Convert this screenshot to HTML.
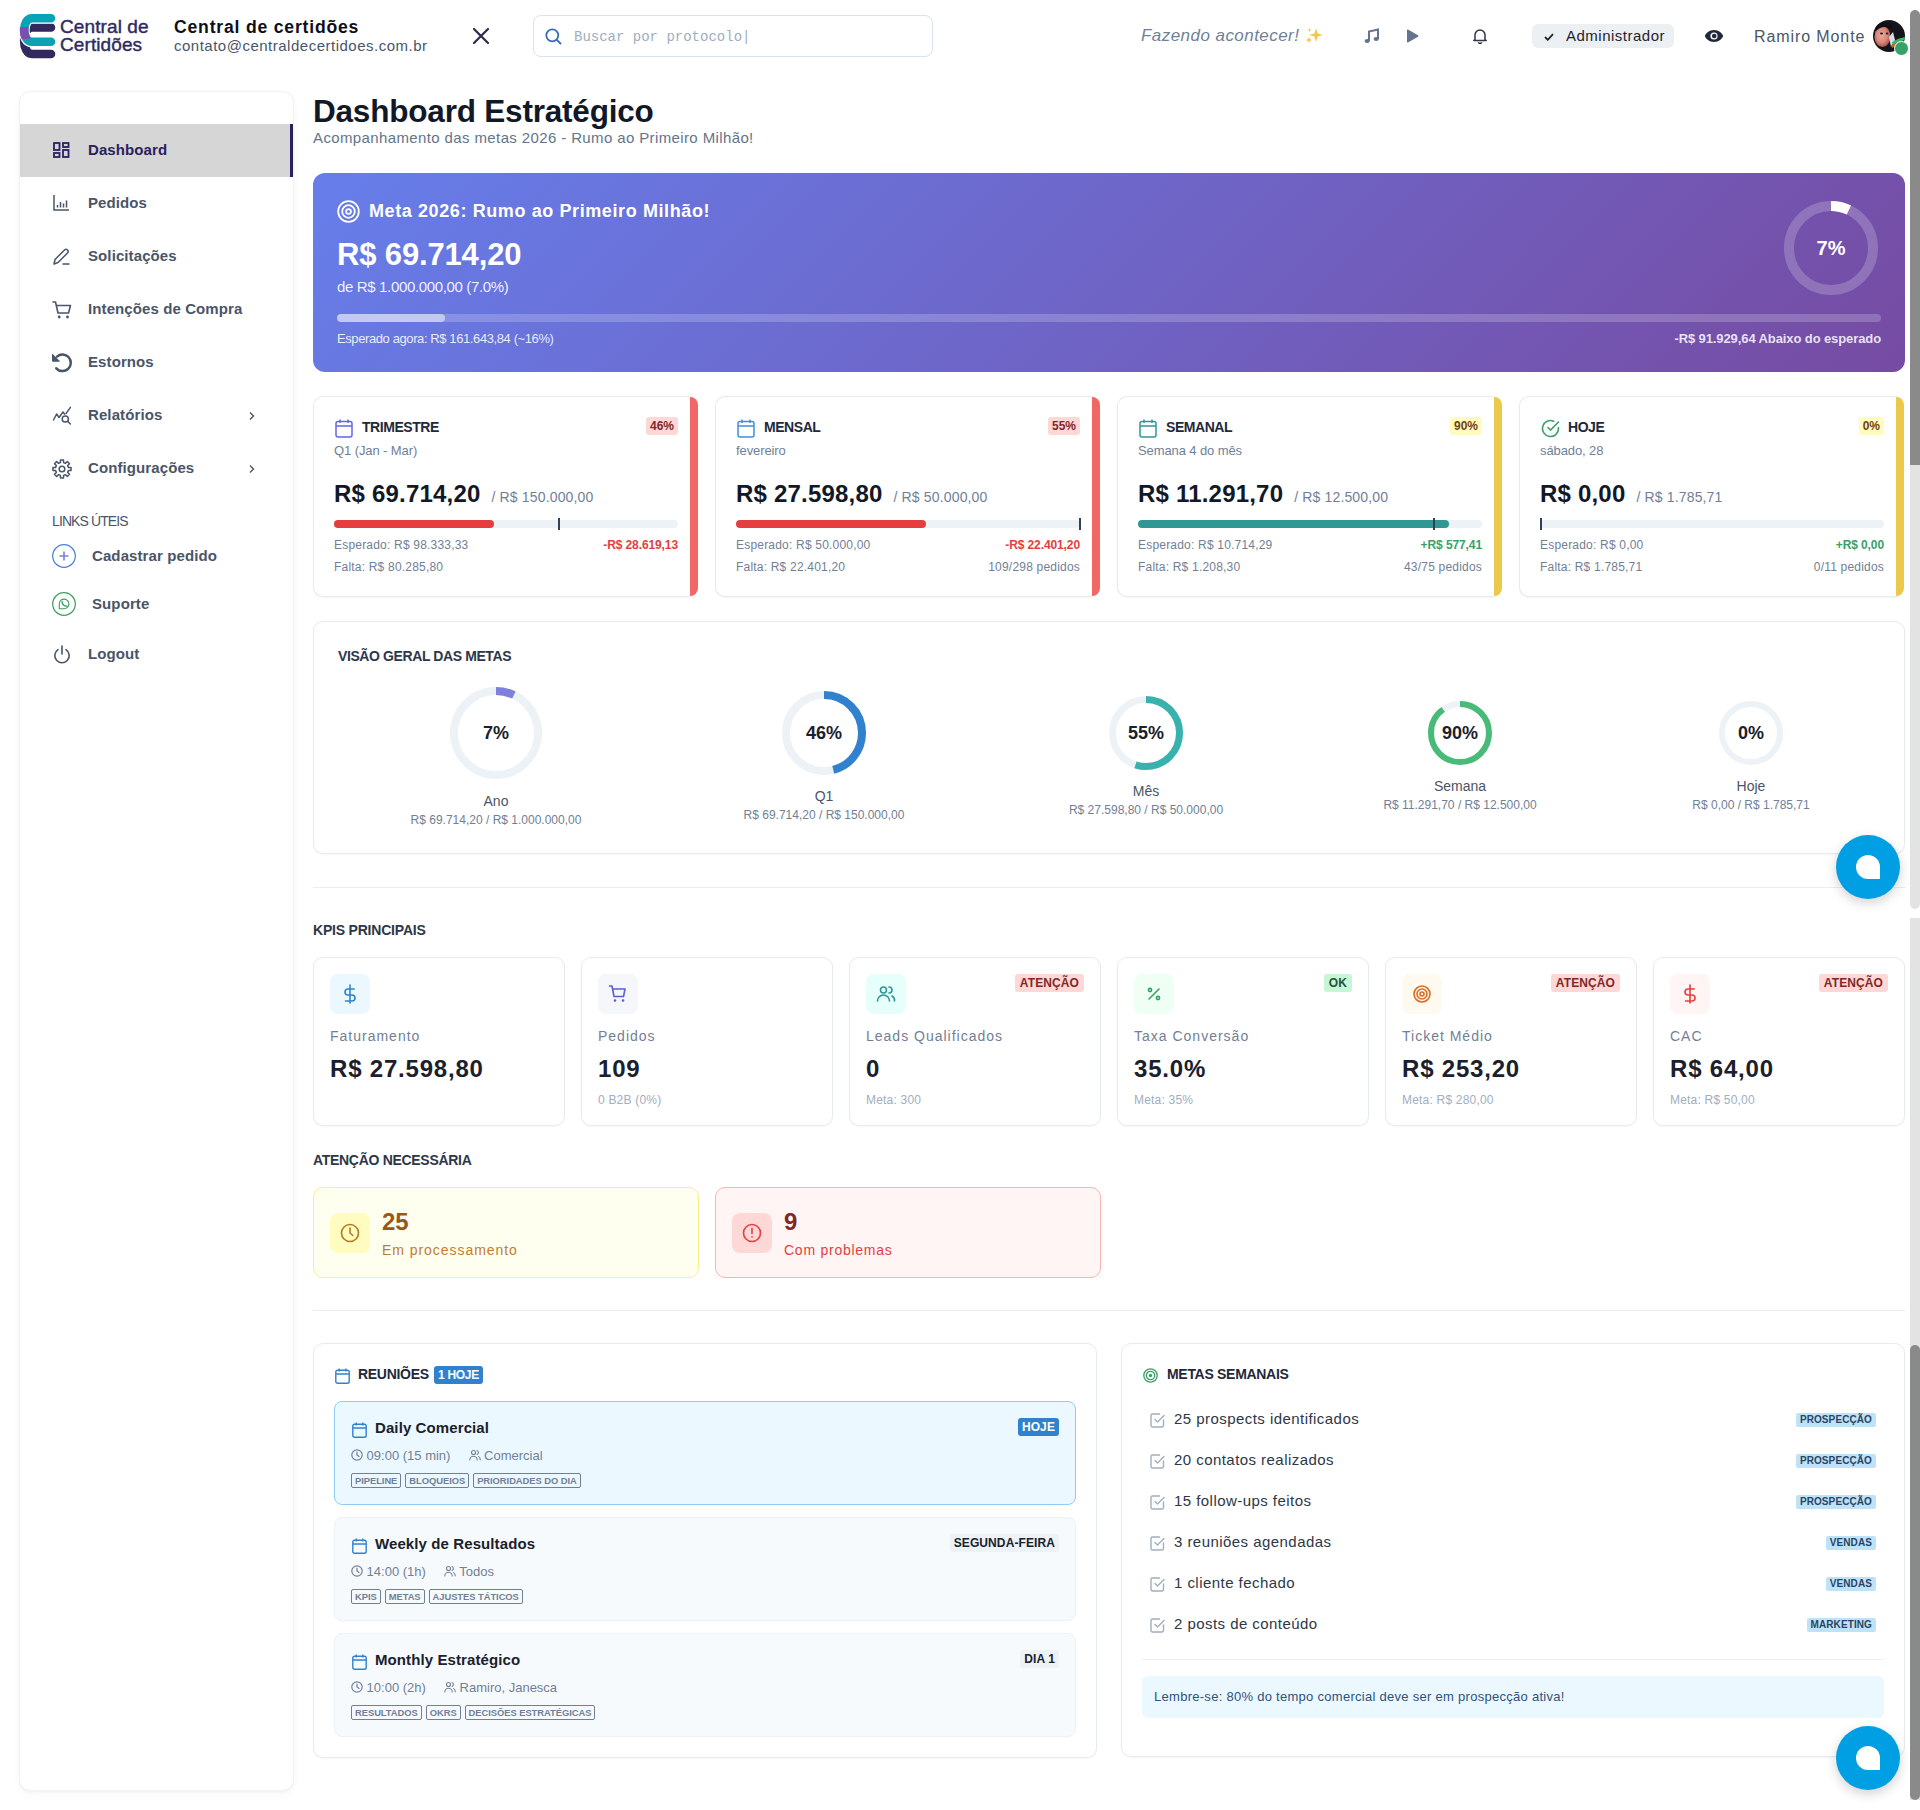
<!DOCTYPE html>
<html lang="pt-BR">
<head>
<meta charset="utf-8">
<title>Dashboard Estratégico</title>
<style>
*{box-sizing:border-box;margin:0;padding:0}
html,body{width:1920px;height:1810px;overflow:hidden;background:#fff}
body{position:relative;font-family:"Liberation Sans",sans-serif;color:#1a202c}
.abs{position:absolute}
.nw{white-space:nowrap}
svg{display:block}
/* header */
.hdr-title{left:174px;top:16.5px;font-size:17.6px;font-weight:700;color:#0f0f1a;letter-spacing:.8px}
.hdr-mail{left:174px;top:37px;font-size:15px;color:#4a5568;letter-spacing:.5px}
.search{left:533px;top:15px;width:400px;height:42px;border:1px solid #d9e2f0;border-radius:8px}
.search .ph{position:absolute;left:40px;top:13px;font-family:"Liberation Mono",monospace;font-size:14px;color:#a0aec0}
.motto{left:1141px;top:26px;font-size:17px;font-style:italic;color:#718096;letter-spacing:.45px}
.admin{left:1532px;top:24px;width:142px;height:24px;background:#edf0f2;border-radius:6px}
.admin span{position:absolute;left:34px;top:3px;font-size:15px;color:#1f2330;letter-spacing:.5px}
.uname{left:1754px;top:27.5px;font-size:16px;color:#4a5568;letter-spacing:.9px}
/* sidebar */
.side{left:20px;top:92px;width:273px;height:1698px;background:#fff;border-radius:10px;box-shadow:0 0 0 1px #f0f2f7,0 1px 3px rgba(0,0,0,.07),0 4px 10px rgba(0,0,0,.04)}
.nav{position:absolute;left:0;width:273px;height:53px}
.nav .ic{position:absolute;left:33px;top:18px}
.nav .lb{position:absolute;left:68px;top:17px;font-size:15px;font-weight:700;color:#4a5568;letter-spacing:.1px}
.nav.act{background:#d6d6d6;border-right:3px solid #2a2160}
.nav.act .lb{color:#2a2160}
.chev{position:absolute;left:228px;top:22px}
/* scrollbar */
.sb{left:1910px;width:10px}
/* chat */
.chat{left:1836px;width:64px;height:64px;border-radius:50%;background:#009ee3;box-shadow:0 4px 12px rgba(0,0,0,.18)}
.chat i{position:absolute;left:20px;top:20px;width:24px;height:24px;background:#fff;border-radius:12px 12px 0 12px}
</style>
</head>
<body>

<!-- ===== HEADER ===== -->
<svg class="abs" style="left:18px;top:12px" width="40" height="48" viewBox="0 0 40 48">
  <defs><clipPath id="lgc"><rect x="0" y="15" width="12" height="12"/></clipPath></defs>
  <path d="M33 15.5 H14 C3.5 15.5 3.5 42 14 42 H33" fill="none" stroke="#33295e" stroke-width="8.6" stroke-linecap="round"/>
  <path d="M33 6.3 H14 C3.5 6.3 3.5 29.8 14 29.8 H33" fill="none" stroke="#fff" stroke-width="11" stroke-linecap="round"/>
  <path d="M33 6.3 H14 C3.5 6.3 3.5 29.8 14 29.8 H33" fill="none" stroke="#0aa3b5" stroke-width="8.6" stroke-linecap="round"/>
  <path d="M33 6.3 H14 C3.5 6.3 3.5 29.8 14 29.8 H33" fill="none" stroke="#7a4fae" stroke-width="8.6" clip-path="url(#lgc)"/>
</svg>
<div class="abs nw" style="left:60px;top:18px;font-size:19px;line-height:18px;color:#2f2a5e;letter-spacing:.1px;-webkit-text-stroke:.4px #2f2a5e">Central de<br>Certidões</div>
<div class="abs nw hdr-title">Central de certidões</div>
<div class="abs nw hdr-mail">contato@centraldecertidoes.com.br</div>
<svg class="abs" style="left:473px;top:28px" width="16" height="16" viewBox="0 0 16 16"><path d="M1 1L15 15M15 1L1 15" stroke="#2d2a4a" stroke-width="2.2" stroke-linecap="round"/></svg>
<div class="abs search">
  <svg class="abs" style="left:11px;top:12px" width="17" height="17" viewBox="0 0 17 17"><circle cx="7.3" cy="7.3" r="6" fill="none" stroke="#3b6db3" stroke-width="1.8"/><path d="M11.6 11.6L15.5 15.5" stroke="#3b6db3" stroke-width="1.8" stroke-linecap="round"/></svg>
  <span class="ph nw">Buscar por protocolo|</span>
</div>
<div class="abs nw motto">Fazendo acontecer!</div>
<div class="abs" style="left:1305px;top:27px;width:19px;height:17px">
  <svg width="19" height="17" viewBox="0 0 19 17"><path d="M11 1 L12.6 6.4 L18 8 L12.6 9.6 L11 15 L9.4 9.6 L4 8 L9.4 6.4Z" fill="#f6c744"/><path d="M4 10 L4.9 12.1 L7 13 L4.9 13.9 L4 16 L3.1 13.9 L1 13 L3.1 12.1Z" fill="#f6c744"/><path d="M4.5 1 L5.1 2.4 L6.5 3 L5.1 3.6 L4.5 5 L3.9 3.6 L2.5 3 L3.9 2.4Z" fill="#f6c744"/></svg>
</div>
<svg class="abs" style="left:1364px;top:28px" width="16" height="16" viewBox="0 0 16 16"><path d="M5 13 V3.5 L14 1.5 V11" fill="none" stroke="#64748b" stroke-width="2"/><ellipse cx="3.2" cy="13" rx="2.6" ry="2" fill="#64748b"/><ellipse cx="12.2" cy="11" rx="2.6" ry="2" fill="#64748b"/></svg>
<svg class="abs" style="left:1406px;top:29px" width="13" height="14" viewBox="0 0 13 14"><path d="M1 1.2 Q1 0 2 .6 L12 6.3 Q13 7 12 7.7 L2 13.4 Q1 14 1 12.8Z" fill="#64748b"/></svg>
<svg class="abs" style="left:1472px;top:28px" width="16" height="16" viewBox="0 0 16 16"><path d="M3 11.5 V7 a5 5 0 0 1 10 0 V11.5 L14.2 12.6 H1.8Z" fill="none" stroke="#2d3748" stroke-width="1.5" stroke-linejoin="round"/><path d="M6.3 14.2 a1.8 1.8 0 0 0 3.4 0" fill="none" stroke="#2d3748" stroke-width="1.4"/></svg>
<div class="abs admin"><svg class="abs" style="left:12px;top:9px" width="10" height="8" viewBox="0 0 10 8"><path d="M1 4 L3.8 6.8 L9 1.2" fill="none" stroke="#1f2330" stroke-width="1.8"/></svg><span class="nw">Administrador</span></div>
<svg class="abs" style="left:1704px;top:29px" width="20" height="14" viewBox="0 0 20 14"><path d="M10 1 C5 1 1.8 4.5 .8 7 C1.8 9.5 5 13 10 13 C15 13 18.2 9.5 19.2 7 C18.2 4.5 15 1 10 1Z" fill="#1e293b"/><circle cx="10" cy="7" r="3.6" fill="#fff"/><circle cx="10.2" cy="7" r="2.3" fill="#1e293b"/></svg>
<div class="abs nw uname">Ramiro Monte</div>
<svg class="abs" style="left:1873px;top:20px" width="32" height="32" viewBox="0 0 32 32">
  <defs><clipPath id="avc"><circle cx="16" cy="16" r="16"/></clipPath>
  <radialGradient id="avf" cx="45%" cy="45%" r="55%"><stop offset="0" stop-color="#e9a79a"/><stop offset=".6" stop-color="#d98a7c"/><stop offset="1" stop-color="#a8584a"/></radialGradient></defs>
  <g clip-path="url(#avc)">
    <rect width="32" height="32" fill="#15141b"/>
    <ellipse cx="9.5" cy="16.5" rx="8" ry="10.5" fill="url(#avf)"/>
    <path d="M2 6 Q10 -1 20 6 L18 9 Q10 4 3 11Z" fill="#101018"/>
    <ellipse cx="8.5" cy="13.5" rx="1.5" ry="1" fill="#2a1a1a"/>
    <ellipse cx="14" cy="13.5" rx="1.3" ry="1" fill="#2a1a1a"/>
    <path d="M16 17 L20 12 L22 20 L18 27Z" fill="#d8dde6"/>
    <path d="M19 22 Q25 18 32 17 L32 20 Q25 22 20 25Z" fill="#3fb56a"/>
    <path d="M18 25 Q24 22 30 21 L30 24 Q24 25 19 28Z" fill="#b86a1c"/>
  </g>
</svg>
<div class="abs" style="left:1893.5px;top:40.5px;width:15px;height:15px;border-radius:50%;background:#38a169;border:1.6px solid #fff"></div>

<!-- ===== SCROLLBAR ===== -->
<div class="abs sb" style="top:10px;height:460px;background:#8a8a8a;border-radius:5px 5px 0 0"></div>
<div class="abs sb" style="top:465px;height:444px;background:#e3e3e3;border-radius:0 0 5px 5px"></div>
<div class="abs sb" style="top:918px;height:882px;background:#e3e3e3"></div>
<div class="abs sb" style="top:1345px;height:455px;background:#8a8a8a;border-radius:5px"></div>

<!-- ===== SIDEBAR ===== -->
<div class="abs side">
  <div class="nav act" style="top:32px">
    <svg class="ic" style="top:18px" width="17" height="16" viewBox="0 0 17 16"><g fill="none" stroke="#2a2160" stroke-width="1.8"><rect x="1" y="1" width="5.5" height="7"/><rect x="1" y="11" width="5.5" height="4"/><rect x="10" y="1" width="5.5" height="4"/><rect x="10" y="8" width="5.5" height="7"/></g></svg>
    <span class="lb nw">Dashboard</span>
  </div>
  <div class="nav" style="top:85px">
    <svg class="ic" width="17" height="16" viewBox="0 0 17 16"><g stroke="#4a5568" stroke-width="1.5" fill="none"><path d="M1 0 V15 H16"/><path d="M4.5 12.5 V10 M7.5 12.5 V7 M10.5 12.5 V8.5 M13.5 12.5 V5.5"/></g></svg>
    <span class="lb nw">Pedidos</span>
  </div>
  <div class="nav" style="top:138px">
    <svg class="ic" width="18" height="17" viewBox="0 0 18 17"><g stroke="#4a5568" stroke-width="1.5" fill="none" stroke-linecap="round" stroke-linejoin="round"><path d="M1 16 L2 11.5 L11.5 2 a2.1 2.1 0 0 1 3 3 L5 14.5 Z"/><path d="M10 16 H16"/></g></svg>
    <span class="lb nw">Solicitações</span>
  </div>
  <div class="nav" style="top:191px">
    <svg class="ic" style="left:32px" width="20" height="18" viewBox="0 0 20 18"><g stroke="#4a5568" stroke-width="1.6" fill="none" stroke-linecap="round" stroke-linejoin="round"><path d="M1 1 H3.5 L6 12 H16.5 L18.5 4.5 H4.5"/></g><circle cx="7.2" cy="16" r="1.4" fill="#4a5568"/><circle cx="15.5" cy="16" r="1.4" fill="#4a5568"/></svg>
    <span class="lb nw">Intenções de Compra</span>
  </div>
  <div class="nav" style="top:244px">
    <svg class="ic" style="left:32px;top:16px" width="22" height="22" viewBox="0 0 22 22"><path d="M5 4.6 A8.3 8.3 0 1 1 4.3 16.3" fill="none" stroke="#4a5568" stroke-width="2.5" stroke-linecap="round"/><path d="M.5 2.3 V9.2 H7.4Z" fill="#4a5568" stroke="#4a5568" stroke-width="1" stroke-linejoin="round"/></svg>
    <span class="lb nw">Estornos</span>
  </div>
  <div class="nav" style="top:297px">
    <svg class="ic" style="left:32px;top:17px" width="20" height="20" viewBox="0 0 20 20"><g stroke="#4a5568" stroke-width="1.5" fill="none" stroke-linecap="round" stroke-linejoin="round"><path d="M1.5 14 L4.6 8 L7 11.5 L11 6 L12.6 8"/><path d="M14 7.6 L18.4 1.4"/><circle cx="13.3" cy="13" r="3.1"/><path d="M15.6 15.3 L18.4 18"/></g></svg>
    <span class="lb nw">Relatórios</span>
    <svg class="chev" width="8" height="10" viewBox="0 0 8 10"><path d="M2 1.5 L5.5 5 L2 8.5" fill="none" stroke="#4a5568" stroke-width="1.4"/></svg>
  </div>
  <div class="nav" style="top:350px">
    <svg class="ic" style="left:31px;top:15.5px" width="22" height="22" viewBox="0 0 22 22"><g fill="none" stroke="#4a5568" stroke-width="1.5" stroke-linejoin="round"><path d="M9.40 4.60 L9.48 1.93 L12.52 1.93 L12.60 4.60 L14.40 5.34 L16.34 3.51 L18.49 5.66 L16.66 7.60 L17.40 9.40 L20.07 9.48 L20.07 12.52 L17.40 12.60 L16.66 14.40 L18.49 16.34 L16.34 18.49 L14.40 16.66 L12.60 17.40 L12.52 20.07 L9.48 20.07 L9.40 17.40 L7.60 16.66 L5.66 18.49 L3.51 16.34 L5.34 14.40 L4.60 12.60 L1.93 12.52 L1.93 9.48 L4.60 9.40 L5.34 7.60 L3.51 5.66 L5.66 3.51 L7.60 5.34Z"/><circle cx="11" cy="11" r="2.8"/></g></svg>
    <span class="lb nw">Configurações</span>
    <svg class="chev" width="8" height="10" viewBox="0 0 8 10"><path d="M2 1.5 L5.5 5 L2 8.5" fill="none" stroke="#4a5568" stroke-width="1.4"/></svg>
  </div>
  <div class="abs nw" style="left:32px;top:421px;font-size:14px;color:#4a5568;letter-spacing:-.9px">LINKS ÚTEIS</div>
  <svg class="abs" style="left:32px;top:452px" width="24" height="24" viewBox="0 0 24 24"><circle cx="12" cy="12" r="11.3" fill="none" stroke="#4a7fd8" stroke-width="1.2"/><path d="M12 7.5 V16.5 M7.5 12 H16.5" stroke="#7b7fe0" stroke-width="1.6"/></svg>
  <div class="abs nw" style="left:72px;top:455px;font-size:15px;font-weight:700;color:#4a5568;letter-spacing:.1px">Cadastrar pedido</div>
  <svg class="abs" style="left:32px;top:500px" width="24" height="24" viewBox="0 0 24 24"><circle cx="12" cy="12" r="11.3" fill="none" stroke="#38a05a" stroke-width="1.2"/><path d="M7.3 11.8 V16.7 H12 A4.8 4.8 0 1 0 7.3 11.8Z" fill="none" stroke="#38a05a" stroke-width="1.1" stroke-linejoin="round"/><path d="M10.1 9.7 Q10.3 13.9 14.9 14.1" fill="none" stroke="#38a05a" stroke-width="1.4" stroke-linecap="round"/></svg>
  <div class="abs nw" style="left:72px;top:503px;font-size:15px;font-weight:700;color:#4a5568;letter-spacing:.1px">Suporte</div>
  <svg class="abs" style="left:33px;top:553px" width="18" height="19" viewBox="0 0 18 19"><path d="M5 4.6 A7.2 7.2 0 1 0 13 4.6" fill="none" stroke="#4a5568" stroke-width="1.6" stroke-linecap="round"/><path d="M9 1 V9" stroke="#4a5568" stroke-width="1.6" stroke-linecap="round"/></svg>
  <div class="abs nw" style="left:68px;top:553px;font-size:15px;font-weight:700;color:#4a5568;letter-spacing:.1px">Logout</div>
</div>

<!-- ===== MAIN ===== -->
<div class="abs nw" style="left:313px;top:92.5px;font-size:31.5px;font-weight:700;color:#111827;letter-spacing:-.2px">Dashboard Estratégico</div>
<div class="abs nw" style="left:313px;top:129px;font-size:15px;color:#64748b;letter-spacing:.38px">Acompanhamento das metas 2026 - Rumo ao Primeiro Milhão!</div>

<!-- banner -->
<div class="abs" style="left:313px;top:173px;width:1592px;height:199px;border-radius:12px;background:linear-gradient(135deg,#667eea 0%,#764ba2 100%)">
  <svg class="abs" style="left:24px;top:27px" width="23" height="23" viewBox="0 0 23 23"><g fill="none" stroke="#fff" stroke-width="1.8"><circle cx="11.5" cy="11.5" r="10.3"/><circle cx="11.5" cy="11.5" r="6.3"/><circle cx="11.5" cy="11.5" r="2.4"/></g></svg>
  <div class="abs nw" style="left:56px;top:28px;font-size:18px;font-weight:700;color:#fff;letter-spacing:.6px">Meta 2026: Rumo ao Primeiro Milhão!</div>
  <div class="abs nw" style="left:24px;top:64px;font-size:31px;font-weight:700;color:#fff;letter-spacing:-.15px">R$ 69.714,20</div>
  <div class="abs nw" style="left:24px;top:105px;font-size:15px;color:rgba(255,255,255,.92);letter-spacing:-.35px">de R$ 1.000.000,00 (7.0%)</div>
  <div class="abs" style="left:24px;top:141px;width:1544px;height:8px;border-radius:4px;background:rgba(255,255,255,.2)"><div style="width:108px;height:8px;border-radius:4px;background:rgba(255,255,255,.5)"></div></div>
  <div class="abs nw" style="left:24px;top:158px;font-size:13px;color:rgba(255,255,255,.88);letter-spacing:-.4px">Esperado agora: R$ 161.643,84 (~16%)</div>
  <div class="abs nw" style="right:24px;top:158px;font-size:13px;font-weight:700;color:rgba(255,255,255,.85);letter-spacing:-.1px">-R$ 91.929,64 Abaixo do esperado</div>
  <svg class="abs" style="left:1471px;top:28px" width="94" height="94" viewBox="0 0 94 94"><circle cx="47" cy="47" r="42" fill="none" stroke="rgba(255,255,255,.2)" stroke-width="10"/><circle cx="47" cy="47" r="42" fill="none" stroke="#fff" stroke-width="10" stroke-dasharray="18.47 300" transform="rotate(-90 47 47)"/></svg>
  <div class="abs nw" style="left:1471px;top:64px;width:94px;text-align:center;font-size:20px;font-weight:700;color:#fff">7%</div>
</div>

<!-- period cards -->
<style>
.pc{position:absolute;top:396px;width:386px;height:201px;background:#fff;border:1px solid #e6ebf2;border-right-color:transparent;border-radius:10px;box-shadow:0 1px 2px rgba(0,0,0,.04)}
.pc::after{content:"";position:absolute;right:0;top:0;bottom:0;width:8px;background:#f26666;border-radius:0 9px 9px 0}
.pc.y::after{background:#ecc94b}
.pc .cal{position:absolute;left:21px;top:22px}
.pc .ttl{position:absolute;left:48px;top:22px;font-size:14px;font-weight:700;color:#1e293b;letter-spacing:-.45px}
.pc .sub{position:absolute;left:20px;top:46px;font-size:13px;color:#718096;letter-spacing:-.1px}
.pc .bdg{position:absolute;right:20px;top:20px;height:18px;padding:0 4px;font-size:12px;line-height:18px;font-weight:700;border-radius:3px}
.pc .val{position:absolute;left:20px;top:82.5px;font-size:24px;font-weight:700;color:#111827;letter-spacing:.2px}
.pc .val small{font-size:14px;font-weight:400;color:#718096;margin-left:11px;letter-spacing:.15px}
.pc .bar{position:absolute;left:20px;top:123px;width:344px;height:8px;border-radius:4px;background:#edf2f7}
.pc .bar i{position:absolute;left:0;top:0;height:8px;border-radius:4px}
.pc .bar b{position:absolute;top:-2px;width:2px;height:12px;background:#334155}
.pc .l1{position:absolute;left:20px;top:141px;font-size:12px;color:#718096;letter-spacing:.2px}
.pc .r1{position:absolute;right:20px;top:141px;font-size:12px;font-weight:700;letter-spacing:-.1px}
.pc .l2{position:absolute;left:20px;top:163px;font-size:12px;color:#718096;letter-spacing:.2px}
.pc .r2{position:absolute;right:20px;top:163px;font-size:12px;color:#718096;letter-spacing:.2px}
.bred{background:#fed7d7;color:#822727}
.byel{background:#fefcbf;color:#744210}
</style>
<div class="pc" style="left:313px">
  <svg class="cal" width="18" height="19" viewBox="0 0 18 19"><g fill="none" stroke="#6466e8" stroke-width="1.5"><rect x="1" y="2.5" width="16" height="15.5" rx="2"/><path d="M1 7 H17 M5 .5 V4 M13 .5 V4"/></g></svg>
  <span class="ttl nw">TRIMESTRE</span>
  <span class="bdg bred nw">46%</span>
  <span class="sub nw">Q1 (Jan - Mar)</span>
  <div class="val nw">R$ 69.714,20<small>/ R$ 150.000,00</small></div>
  <div class="bar"><i style="width:160px;background:#e53e3e"></i><b style="left:224px"></b></div>
  <span class="l1 nw">Esperado: R$ 98.333,33</span><span class="r1 nw" style="color:#e53e3e">-R$ 28.619,13</span>
  <span class="l2 nw">Falta: R$ 80.285,80</span>
</div>
<div class="pc" style="left:715px">
  <svg class="cal" width="18" height="19" viewBox="0 0 18 19"><g fill="none" stroke="#3f8ee0" stroke-width="1.5"><rect x="1" y="2.5" width="16" height="15.5" rx="2"/><path d="M1 7 H17 M5 .5 V4 M13 .5 V4"/></g></svg>
  <span class="ttl nw">MENSAL</span>
  <span class="bdg bred nw">55%</span>
  <span class="sub nw">fevereiro</span>
  <div class="val nw">R$ 27.598,80<small>/ R$ 50.000,00</small></div>
  <div class="bar"><i style="width:190px;background:#e53e3e"></i><b style="left:343px"></b></div>
  <span class="l1 nw">Esperado: R$ 50.000,00</span><span class="r1 nw" style="color:#e53e3e">-R$ 22.401,20</span>
  <span class="l2 nw">Falta: R$ 22.401,20</span><span class="r2 nw">109/298 pedidos</span>
</div>
<div class="pc y" style="left:1117px">
  <svg class="cal" width="18" height="19" viewBox="0 0 18 19"><g fill="none" stroke="#319795" stroke-width="1.5"><rect x="1" y="2.5" width="16" height="15.5" rx="2"/><path d="M1 7 H17 M5 .5 V4 M13 .5 V4"/></g></svg>
  <span class="ttl nw">SEMANAL</span>
  <span class="bdg byel nw">90%</span>
  <span class="sub nw">Semana 4 do mês</span>
  <div class="val nw">R$ 11.291,70<small>/ R$ 12.500,00</small></div>
  <div class="bar"><i style="width:311px;background:#319795"></i><b style="left:295px"></b></div>
  <span class="l1 nw">Esperado: R$ 10.714,29</span><span class="r1 nw" style="color:#38a169">+R$ 577,41</span>
  <span class="l2 nw">Falta: R$ 1.208,30</span><span class="r2 nw">43/75 pedidos</span>
</div>
<div class="pc y" style="left:1519px">
  <svg class="cal" width="19" height="19" viewBox="0 0 19 19"><g fill="none" stroke="#38a169" stroke-width="1.6" stroke-linecap="round"><path d="M17.5 8.6 V9.5 A8 8 0 1 1 12.7 2.2"/><path d="M17.5 3 L9.5 11 L7 8.5"/></g></svg>
  <span class="ttl nw">HOJE</span>
  <span class="bdg byel nw">0%</span>
  <span class="sub nw">sábado, 28</span>
  <div class="val nw">R$ 0,00<small>/ R$ 1.785,71</small></div>
  <div class="bar"><b style="left:0"></b></div>
  <span class="l1 nw">Esperado: R$ 0,00</span><span class="r1 nw" style="color:#38a169">+R$ 0,00</span>
  <span class="l2 nw">Falta: R$ 1.785,71</span><span class="r2 nw">0/11 pedidos</span>
</div>

<!-- overview -->
<style>
.ov{position:absolute;left:313px;top:621px;width:1592px;height:233px;background:#fff;border:1px solid #e6ebf2;border-radius:10px;box-shadow:0 1px 2px rgba(0,0,0,.04)}
.ring{position:absolute;text-align:center}
.ring .pct{position:absolute;left:0;width:100%;font-size:18px;font-weight:700;color:#1a202c}
.ring .nm{position:absolute;left:-100px;width:calc(100% + 200px);font-size:14px;color:#4a5568}
.ring .vv{position:absolute;left:-120px;width:calc(100% + 240px);font-size:12px;color:#718096}
</style>
<div class="ov">
  <div class="abs nw" style="left:24px;top:26px;font-size:14px;font-weight:700;color:#2d3748;letter-spacing:-.4px">VISÃO GERAL DAS METAS</div>
</div>
<div class="ring" style="left:450px;top:687px;width:92px;height:92px">
  <svg width="92" height="92" viewBox="0 0 92 92"><circle cx="46" cy="46" r="42" fill="none" stroke="#edf2f7" stroke-width="8"/><circle cx="46" cy="46" r="42" fill="none" stroke="#7f7fde" stroke-width="8" stroke-dasharray="18.47 400" transform="rotate(-90 46 46)"/></svg>
  <span class="pct nw" style="top:36px">7%</span>
  <span class="nm nw" style="top:106px">Ano</span>
  <span class="vv nw" style="top:126px">R$ 69.714,20 / R$ 1.000.000,00</span>
</div>
<div class="ring" style="left:782px;top:691px;width:84px;height:84px">
  <svg width="84" height="84" viewBox="0 0 84 84"><circle cx="42" cy="42" r="38" fill="none" stroke="#edf2f7" stroke-width="8"/><circle cx="42" cy="42" r="38" fill="none" stroke="#3182ce" stroke-width="8" stroke-dasharray="109.8 400" transform="rotate(-90 42 42)"/></svg>
  <span class="pct nw" style="top:32px">46%</span>
  <span class="nm nw" style="top:97px">Q1</span>
  <span class="vv nw" style="top:117px">R$ 69.714,20 / R$ 150.000,00</span>
</div>
<div class="ring" style="left:1109px;top:696px;width:74px;height:74px">
  <svg width="74" height="74" viewBox="0 0 74 74"><circle cx="37" cy="37" r="33.5" fill="none" stroke="#edf2f7" stroke-width="7"/><circle cx="37" cy="37" r="33.5" fill="none" stroke="#38b2ac" stroke-width="7" stroke-dasharray="115.8 400" transform="rotate(-90 37 37)"/></svg>
  <span class="pct nw" style="top:27px">55%</span>
  <span class="nm nw" style="top:87px">Mês</span>
  <span class="vv nw" style="top:107px">R$ 27.598,80 / R$ 50.000,00</span>
</div>
<div class="ring" style="left:1428px;top:701px;width:64px;height:64px">
  <svg width="64" height="64" viewBox="0 0 64 64"><circle cx="32" cy="32" r="29" fill="none" stroke="#edf2f7" stroke-width="6"/><circle cx="32" cy="32" r="29" fill="none" stroke="#48bb78" stroke-width="6" stroke-dasharray="164 400" transform="rotate(-90 32 32)"/></svg>
  <span class="pct nw" style="top:22px">90%</span>
  <span class="nm nw" style="top:77px">Semana</span>
  <span class="vv nw" style="top:97px">R$ 11.291,70 / R$ 12.500,00</span>
</div>
<div class="ring" style="left:1719px;top:701px;width:64px;height:64px">
  <svg width="64" height="64" viewBox="0 0 64 64"><circle cx="32" cy="32" r="29" fill="none" stroke="#edf2f7" stroke-width="6"/></svg>
  <span class="pct nw" style="top:22px">0%</span>
  <span class="nm nw" style="top:77px">Hoje</span>
  <span class="vv nw" style="top:97px">R$ 0,00 / R$ 1.785,71</span>
</div>

<div class="abs" style="left:313px;top:887px;width:1592px;height:1px;background:#e9eef4"></div>

<!-- KPIs -->
<style>
.sec{position:absolute;font-size:14px;font-weight:700;color:#2d3748;white-space:nowrap}
.kc{position:absolute;top:957px;width:252px;height:169px;background:#fff;border:1px solid #e6ebf2;border-radius:10px;box-shadow:0 1px 2px rgba(0,0,0,.04)}
.kc .ib{position:absolute;left:16px;top:16px;width:40px;height:40px;border-radius:8px}
.kc .ib svg{position:absolute;left:10px;top:10px}
.kc .kb{position:absolute;right:16px;top:16px;height:18px;padding:0 5px;font-size:12px;line-height:18px;font-weight:700;border-radius:3px;letter-spacing:.1px}
.kc .kl{position:absolute;left:16px;top:70px;font-size:14px;color:#718096;letter-spacing:1px}
.kc .kv{position:absolute;left:16px;top:97px;font-size:24px;font-weight:700;color:#1a202c;letter-spacing:.8px}
.kc .km{position:absolute;left:16px;top:135px;font-size:12px;color:#a0aec0;letter-spacing:.2px}
.bgrn{background:#c6f6d5;color:#22543d}
</style>
<div class="sec" style="left:313px;top:922px;letter-spacing:-.2px">KPIS PRINCIPAIS</div>
<div class="kc" style="left:313px">
  <div class="ib" style="background:#ebf8ff"><svg width="20" height="20" viewBox="0 0 20 20"><g fill="none" stroke="#3182ce" stroke-width="1.6" stroke-linecap="round"><path d="M10 1 V19"/><path d="M14.2 5 H8 a3 3 0 0 0 0 6 H12 a3 3 0 0 1 0 6 H5.5"/></g></svg></div>
  <span class="kl nw">Faturamento</span>
  <span class="kv nw">R$ 27.598,80</span>
</div>
<div class="kc" style="left:581px">
  <div class="ib" style="background:#f5f7fb"><svg width="20" height="20" viewBox="0 0 20 20"><g fill="none" stroke="#5a5fd0" stroke-width="1.6" stroke-linecap="round" stroke-linejoin="round"><path d="M1.5 2 H4 L6 12.5 H15.5 L17 5 H4.8"/></g><circle cx="7" cy="16.5" r="1.3" fill="#5a5fd0"/><circle cx="15" cy="16.5" r="1.3" fill="#5a5fd0"/></svg></div>
  <span class="kl nw">Pedidos</span>
  <span class="kv nw">109</span>
  <span class="km nw">0 B2B (0%)</span>
</div>
<div class="kc" style="left:849px">
  <div class="ib" style="background:#e6fffa"><svg width="20" height="20" viewBox="0 0 20 20"><g fill="none" stroke="#319795" stroke-width="1.6" stroke-linecap="round"><circle cx="7.5" cy="6" r="3"/><path d="M1.5 17 a6 6 0 0 1 12 0"/><path d="M13 3 a3 3 0 0 1 0 6"/><path d="M16 12 a5 5 0 0 1 2.5 5"/></g></svg></div>
  <span class="kb bred nw">ATENÇÃO</span>
  <span class="kl nw">Leads Qualificados</span>
  <span class="kv nw">0</span>
  <span class="km nw">Meta: 300</span>
</div>
<div class="kc" style="left:1117px">
  <div class="ib" style="background:#f0fff4"><svg width="20" height="20" viewBox="0 0 20 20"><g fill="none" stroke="#38a169" stroke-width="1.6" stroke-linecap="round"><path d="M15 5 L5 15"/><circle cx="6" cy="6" r="1.6"/><circle cx="14" cy="14" r="1.6"/></g></svg></div>
  <span class="kb bgrn nw">OK</span>
  <span class="kl nw">Taxa Conversão</span>
  <span class="kv nw">35.0%</span>
  <span class="km nw">Meta: 35%</span>
</div>
<div class="kc" style="left:1385px">
  <div class="ib" style="background:#fffaf0"><svg width="20" height="20" viewBox="0 0 20 20"><g fill="none" stroke="#dd6b20" stroke-width="1.6"><circle cx="10" cy="10" r="8"/><circle cx="10" cy="10" r="5"/><circle cx="10" cy="10" r="2"/></g></svg></div>
  <span class="kb bred nw">ATENÇÃO</span>
  <span class="kl nw">Ticket Médio</span>
  <span class="kv nw">R$ 253,20</span>
  <span class="km nw">Meta: R$ 280,00</span>
</div>
<div class="kc" style="left:1653px">
  <div class="ib" style="background:#fff5f5"><svg width="20" height="20" viewBox="0 0 20 20"><g fill="none" stroke="#e53e3e" stroke-width="1.6" stroke-linecap="round"><path d="M10 1 V19"/><path d="M14.2 5 H8 a3 3 0 0 0 0 6 H12 a3 3 0 0 1 0 6 H5.5"/></g></svg></div>
  <span class="kb bred nw">ATENÇÃO</span>
  <span class="kl nw">CAC</span>
  <span class="kv nw">R$ 64,00</span>
  <span class="km nw">Meta: R$ 50,00</span>
</div>

<!-- attention -->
<div class="sec" style="left:313px;top:1152px;letter-spacing:-.3px">ATENÇÃO NECESSÁRIA</div>
<div class="abs" style="left:313px;top:1187px;width:386px;height:91px;background:#fffff0;border:1px solid #faf089;border-radius:10px">
  <div class="abs" style="left:16px;top:25px;width:40px;height:40px;border-radius:8px;background:#fefcbf"><svg class="abs" style="left:10px;top:10px" width="20" height="20" viewBox="0 0 20 20"><g fill="none" stroke="#b7791f" stroke-width="1.6" stroke-linecap="round"><circle cx="10" cy="10" r="8.5"/><path d="M10 5 V10 L12.8 12.5"/></g></svg></div>
  <div class="abs nw" style="left:68px;top:20px;font-size:24px;font-weight:700;color:#975a16">25</div>
  <div class="abs nw" style="left:68px;top:54px;font-size:14px;color:#c27c30;letter-spacing:.95px">Em processamento</div>
</div>
<div class="abs" style="left:715px;top:1187px;width:386px;height:91px;background:#fff5f5;border:1px solid #feb2b2;border-radius:10px">
  <div class="abs" style="left:16px;top:25px;width:40px;height:40px;border-radius:8px;background:#fed7d7"><svg class="abs" style="left:10px;top:10px" width="20" height="20" viewBox="0 0 20 20"><g fill="none" stroke="#e53e3e" stroke-width="1.6" stroke-linecap="round"><circle cx="10" cy="10" r="8.5"/><path d="M10 5.5 V10.5"/><path d="M10 13.8 V14"/></g></svg></div>
  <div class="abs nw" style="left:68px;top:20px;font-size:24px;font-weight:700;color:#822727">9</div>
  <div class="abs nw" style="left:68px;top:54px;font-size:14px;color:#e53e3e;letter-spacing:.75px">Com problemas</div>
</div>

<div class="abs" style="left:313px;top:1310px;width:1592px;height:1px;background:#e9eef4"></div>

<!-- meetings -->
<style>
.bc{position:absolute;top:1343px;width:784px;height:415px;background:#fff;border:1px solid #e6ebf2;border-radius:10px;box-shadow:0 1px 2px rgba(0,0,0,.04)}
.mt{position:absolute;left:20px;width:742px;height:104px;border-radius:8px;background:#f7fafc;border:1px solid #edf2f7}
.mt.today{background:#ebf8ff;border-color:#90cdf4}
.mt .cic{position:absolute;left:17px;top:20px}
.mt .mn{position:absolute;left:40px;top:16.5px;font-size:15px;font-weight:700;color:#1a202c;letter-spacing:.1px}
.mt .mb{position:absolute;right:16px;top:16px;height:18px;padding:0 4px;font-size:12px;line-height:18px;font-weight:700;border-radius:3px;letter-spacing:.1px}
.mt .meta{position:absolute;left:16px;top:46px;font-size:13px;color:#718096;white-space:nowrap}
.mt .meta svg{display:inline-block;vertical-align:-1px}
.mt .tags{position:absolute;left:16px;top:71px;white-space:nowrap;font-size:0}
.mt .tags span{display:inline-block;height:15px;border:1px solid #718096;border-radius:2px;padding:0 3px;margin-right:4px;font-size:9.4px;line-height:13px;font-weight:700;color:#718096;letter-spacing:-.05px}
.gl{position:absolute;left:20px;width:742px;height:41px}
.gl svg{position:absolute;left:8px;top:13px}
.gl .gt{position:absolute;left:32px;top:10px;font-size:15px;color:#2d3748;letter-spacing:.45px}
.gl .gb{position:absolute;right:8px;top:13px;height:14px;padding:0 4px;font-size:10px;line-height:14px;font-weight:700;color:#2a4365;background:#bee3f8;border-radius:2px;letter-spacing:.1px}
</style>
<div class="bc" style="left:313px">
  <svg class="abs" style="left:21px;top:24px" width="15" height="16" viewBox="0 0 15 16"><g fill="none" stroke="#3182ce" stroke-width="1.4"><rect x=".8" y="2.3" width="13.4" height="12.9" rx="1.8"/><path d="M.8 6 H14.2 M4.2 .5 V3.5 M10.8 .5 V3.5"/></g></svg>
  <div class="abs nw" style="left:44px;top:22px;font-size:14px;font-weight:700;color:#1e293b;letter-spacing:-.3px">REUNIÕES</div>
  <div class="abs nw" style="left:120px;top:22px;height:18px;padding:0 4px;font-size:12px;line-height:18px;font-weight:700;color:#fff;background:#3182ce;border-radius:3px;letter-spacing:-.3px">1 HOJE</div>

  <div class="mt today" style="top:57px">
    <svg class="cic" width="15" height="16" viewBox="0 0 15 16"><g fill="none" stroke="#3182ce" stroke-width="1.4"><rect x=".8" y="2.3" width="13.4" height="12.9" rx="1.8"/><path d="M.8 6 H14.2 M4.2 .5 V3.5 M10.8 .5 V3.5"/></g></svg>
    <span class="mn nw">Daily Comercial</span>
    <span class="mb nw" style="background:#3182ce;color:#fff">HOJE</span>
    <div class="meta"><svg width="12" height="12" viewBox="0 0 12 12"><g fill="none" stroke="#718096" stroke-width="1.2" stroke-linecap="round"><circle cx="6" cy="6" r="5.2"/><path d="M6 3 V6 L8 7.5"/></g></svg> 09:00 (15 min) &nbsp;&nbsp;&nbsp; <svg width="12" height="12" viewBox="0 0 12 12"><g fill="none" stroke="#718096" stroke-width="1.1" stroke-linecap="round"><circle cx="4.5" cy="3.5" r="2"/><path d="M.8 11 a3.7 3.7 0 0 1 7.4 0"/><path d="M8 1.6 a2 2 0 0 1 0 3.8"/><path d="M9.6 7.6 a3.5 3.5 0 0 1 1.6 3.4"/></g></svg> Comercial</div>
    <div class="tags"><span>PIPELINE</span><span>BLOQUEIOS</span><span>PRIORIDADES DO DIA</span></div>
  </div>
  <div class="mt" style="top:173px">
    <svg class="cic" width="15" height="16" viewBox="0 0 15 16"><g fill="none" stroke="#3182ce" stroke-width="1.4"><rect x=".8" y="2.3" width="13.4" height="12.9" rx="1.8"/><path d="M.8 6 H14.2 M4.2 .5 V3.5 M10.8 .5 V3.5"/></g></svg>
    <span class="mn nw">Weekly de Resultados</span>
    <span class="mb nw" style="background:#edf2f7;color:#1a202c">SEGUNDA-FEIRA</span>
    <div class="meta"><svg width="12" height="12" viewBox="0 0 12 12"><g fill="none" stroke="#718096" stroke-width="1.2" stroke-linecap="round"><circle cx="6" cy="6" r="5.2"/><path d="M6 3 V6 L8 7.5"/></g></svg> 14:00 (1h) &nbsp;&nbsp;&nbsp; <svg width="12" height="12" viewBox="0 0 12 12"><g fill="none" stroke="#718096" stroke-width="1.1" stroke-linecap="round"><circle cx="4.5" cy="3.5" r="2"/><path d="M.8 11 a3.7 3.7 0 0 1 7.4 0"/><path d="M8 1.6 a2 2 0 0 1 0 3.8"/><path d="M9.6 7.6 a3.5 3.5 0 0 1 1.6 3.4"/></g></svg> Todos</div>
    <div class="tags"><span>KPIS</span><span>METAS</span><span>AJUSTES TÁTICOS</span></div>
  </div>
  <div class="mt" style="top:289px">
    <svg class="cic" width="15" height="16" viewBox="0 0 15 16"><g fill="none" stroke="#3182ce" stroke-width="1.4"><rect x=".8" y="2.3" width="13.4" height="12.9" rx="1.8"/><path d="M.8 6 H14.2 M4.2 .5 V3.5 M10.8 .5 V3.5"/></g></svg>
    <span class="mn nw">Monthly Estratégico</span>
    <span class="mb nw" style="background:#edf2f7;color:#1a202c">DIA 1</span>
    <div class="meta"><svg width="12" height="12" viewBox="0 0 12 12"><g fill="none" stroke="#718096" stroke-width="1.2" stroke-linecap="round"><circle cx="6" cy="6" r="5.2"/><path d="M6 3 V6 L8 7.5"/></g></svg> 10:00 (2h) &nbsp;&nbsp;&nbsp; <svg width="12" height="12" viewBox="0 0 12 12"><g fill="none" stroke="#718096" stroke-width="1.1" stroke-linecap="round"><circle cx="4.5" cy="3.5" r="2"/><path d="M.8 11 a3.7 3.7 0 0 1 7.4 0"/><path d="M8 1.6 a2 2 0 0 1 0 3.8"/><path d="M9.6 7.6 a3.5 3.5 0 0 1 1.6 3.4"/></g></svg> Ramiro, Janesca</div>
    <div class="tags"><span>RESULTADOS</span><span>OKRS</span><span>DECISÕES ESTRATÉGICAS</span></div>
  </div>
</div>

<!-- metas semanais -->
<div class="bc" style="left:1121px;height:414px">
  <svg class="abs" style="left:21px;top:24px" width="15" height="15" viewBox="0 0 15 15"><g fill="none" stroke="#38a169" stroke-width="1.3"><circle cx="7.5" cy="7.5" r="6.7"/><circle cx="7.5" cy="7.5" r="4.2"/></g><circle cx="7.5" cy="7.5" r="1.7" fill="#38a169"/></svg>
  <div class="abs nw" style="left:45px;top:22px;font-size:14px;font-weight:700;color:#1e293b;letter-spacing:-.3px">METAS SEMANAIS</div>
  <div class="gl" style="top:56px"><svg width="15" height="15" viewBox="0 0 15 15"><g fill="none" stroke="#a0aec0" stroke-width="1.4" stroke-linecap="round" stroke-linejoin="round"><path d="M13.5 7 V12.5 a1.5 1.5 0 0 1 -1.5 1.5 H2.5 a1.5 1.5 0 0 1 -1.5 -1.5 V2.5 a1.5 1.5 0 0 1 1.5 -1.5 H9.5"/><path d="M5 6.5 L7.5 9 L14 2.5"/></g></svg><span class="gt nw">25 prospects identificados</span><span class="gb nw">PROSPECÇÃO</span></div>
  <div class="gl" style="top:97px"><svg width="15" height="15" viewBox="0 0 15 15"><g fill="none" stroke="#a0aec0" stroke-width="1.4" stroke-linecap="round" stroke-linejoin="round"><path d="M13.5 7 V12.5 a1.5 1.5 0 0 1 -1.5 1.5 H2.5 a1.5 1.5 0 0 1 -1.5 -1.5 V2.5 a1.5 1.5 0 0 1 1.5 -1.5 H9.5"/><path d="M5 6.5 L7.5 9 L14 2.5"/></g></svg><span class="gt nw">20 contatos realizados</span><span class="gb nw">PROSPECÇÃO</span></div>
  <div class="gl" style="top:138px"><svg width="15" height="15" viewBox="0 0 15 15"><g fill="none" stroke="#a0aec0" stroke-width="1.4" stroke-linecap="round" stroke-linejoin="round"><path d="M13.5 7 V12.5 a1.5 1.5 0 0 1 -1.5 1.5 H2.5 a1.5 1.5 0 0 1 -1.5 -1.5 V2.5 a1.5 1.5 0 0 1 1.5 -1.5 H9.5"/><path d="M5 6.5 L7.5 9 L14 2.5"/></g></svg><span class="gt nw">15 follow-ups feitos</span><span class="gb nw">PROSPECÇÃO</span></div>
  <div class="gl" style="top:179px"><svg width="15" height="15" viewBox="0 0 15 15"><g fill="none" stroke="#a0aec0" stroke-width="1.4" stroke-linecap="round" stroke-linejoin="round"><path d="M13.5 7 V12.5 a1.5 1.5 0 0 1 -1.5 1.5 H2.5 a1.5 1.5 0 0 1 -1.5 -1.5 V2.5 a1.5 1.5 0 0 1 1.5 -1.5 H9.5"/><path d="M5 6.5 L7.5 9 L14 2.5"/></g></svg><span class="gt nw">3 reuniões agendadas</span><span class="gb nw">VENDAS</span></div>
  <div class="gl" style="top:220px"><svg width="15" height="15" viewBox="0 0 15 15"><g fill="none" stroke="#a0aec0" stroke-width="1.4" stroke-linecap="round" stroke-linejoin="round"><path d="M13.5 7 V12.5 a1.5 1.5 0 0 1 -1.5 1.5 H2.5 a1.5 1.5 0 0 1 -1.5 -1.5 V2.5 a1.5 1.5 0 0 1 1.5 -1.5 H9.5"/><path d="M5 6.5 L7.5 9 L14 2.5"/></g></svg><span class="gt nw">1 cliente fechado</span><span class="gb nw">VENDAS</span></div>
  <div class="gl" style="top:261px"><svg width="15" height="15" viewBox="0 0 15 15"><g fill="none" stroke="#a0aec0" stroke-width="1.4" stroke-linecap="round" stroke-linejoin="round"><path d="M13.5 7 V12.5 a1.5 1.5 0 0 1 -1.5 1.5 H2.5 a1.5 1.5 0 0 1 -1.5 -1.5 V2.5 a1.5 1.5 0 0 1 1.5 -1.5 H9.5"/><path d="M5 6.5 L7.5 9 L14 2.5"/></g></svg><span class="gt nw">2 posts de conteúdo</span><span class="gb nw">MARKETING</span></div>
  <div class="abs" style="left:20px;top:315px;width:742px;height:1px;background:#edf2f7"></div>
  <div class="abs" style="left:20px;top:332px;width:742px;height:42px;background:#ebf8ff;border-radius:6px">
    <span class="abs nw" style="left:12px;top:13px;font-size:13px;color:#2c5282;letter-spacing:.28px">Lembre-se: 80% do tempo comercial deve ser em prospecção ativa!</span>
  </div>
</div>

<!--MAIN-->

<!-- chat buttons -->
<div class="abs chat" style="top:835px"><i></i></div>
<div class="abs chat" style="top:1726px"><i></i></div>

</body>
</html>
